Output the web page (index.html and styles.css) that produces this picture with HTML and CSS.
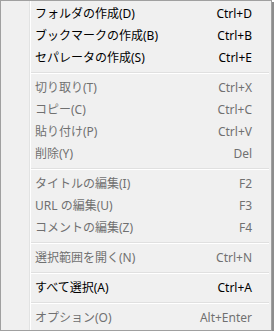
FILE: index.html
```html
<!DOCTYPE html>
<html lang="ja">
<head>
    <meta charset="UTF-8">
    <title>コンテキストメニュー</title>
    <link rel="stylesheet" href="styles.css">
</head>
<body>
    <div class="menu">
        <div class="item"><span class="label">フォルダの作成(D)</span><span class="key">Ctrl+D</span></div>
        <div class="item"><span class="label">ブックマークの作成(B)</span><span class="key">Ctrl+B</span></div>
        <div class="item"><span class="label">セパレータの作成(S)</span><span class="key">Ctrl+E</span></div>
        <div class="sep"></div>
        <div class="item disabled"><span class="label">切り取り(T)</span><span class="key">Ctrl+X</span></div>
        <div class="item disabled"><span class="label">コピー(C)</span><span class="key">Ctrl+C</span></div>
        <div class="item disabled"><span class="label">貼り付け(P)</span><span class="key">Ctrl+V</span></div>
        <div class="item disabled"><span class="label">削除(Y)</span><span class="key">Del</span></div>
        <div class="sep"></div>
        <div class="item disabled"><span class="label">タイトルの編集(I)</span><span class="key">F2</span></div>
        <div class="item disabled"><span class="label">URL の編集(U)</span><span class="key">F3</span></div>
        <div class="item disabled"><span class="label">コメントの編集(Z)</span><span class="key">F4</span></div>
        <div class="sep"></div>
        <div class="item disabled"><span class="label">選択範囲を開く(N)</span><span class="key">Ctrl+N</span></div>
        <div class="sep"></div>
        <div class="item"><span class="label">すべて選択(A)</span><span class="key">Ctrl+A</span></div>
        <div class="sep"></div>
        <div class="item disabled"><span class="label">オプション(O)</span><span class="key">Alt+Enter</span></div>
    </div>
</body>
</html>
```

FILE: styles.css
```css
body {
    margin: 0;
    background: #ffffff;
    font-family: "Noto Sans", "Noto Sans CJK JP", sans-serif;
    font-size: 12px;
    color: #000000;
}

.menu {
    box-sizing: border-box;
    width: 272px;
    height: 331px;
    padding: 2px;
    border: 1px solid #a0a0a0;
    background: #f0f0f0 linear-gradient(to right, transparent 28px, #e2e3e3 28px, #e2e3e3 29px, #ffffff 29px, #ffffff 30px, transparent 30px);
    box-shadow: 2px 2px 0 #8d8d8d;
}

.item {
    display: flex;
    justify-content: space-between;
    height: 22px;
    line-height: 22px;
    padding: 0 17px 0 32px;
    white-space: nowrap;
}

.item.disabled {
    color: #707070;
}

.sep {
    height: 8px;
    margin-left: 28px;
    background: linear-gradient(to bottom, transparent 3px, #e0e0e0 3px, #e0e0e0 4px, #ffffff 4px, #ffffff 5px, transparent 5px);
}
```
